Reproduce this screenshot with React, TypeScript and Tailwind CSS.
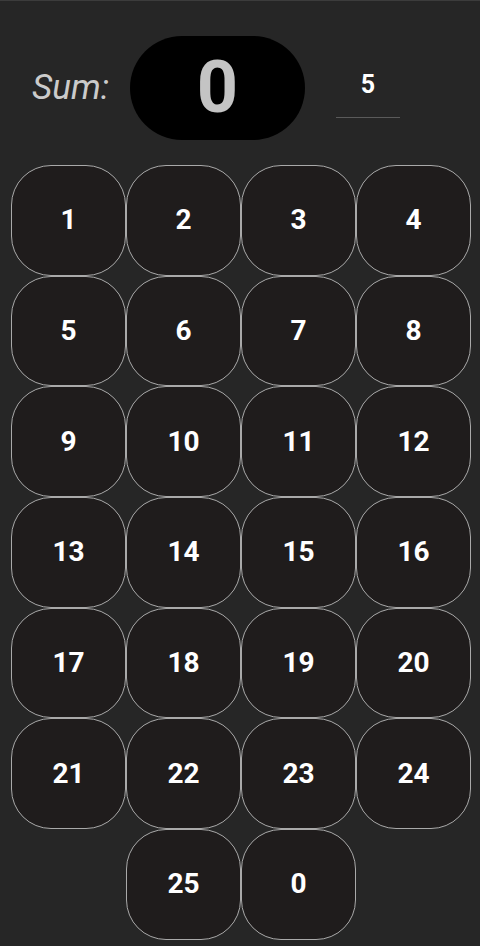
import { useState } from "react";

const nums = Array.from({ length: 24 }, (_, i) => i + 1);

export default function App() {
  const [sum, setSum] = useState(0);
  const [target, setTarget] = useState("5");

  const cell =
    "h-[110.7px] rounded-[40px] border border-[#a9a9a9] bg-[#1f1c1c] text-white text-[28px] font-bold flex items-center justify-center";

  return (
    <div
      className="w-[480px] h-[946px] bg-[#262626] border-t border-[#3c3c3c] overflow-hidden"
      style={{ fontFamily: "Roboto, 'Liberation Sans', sans-serif" }}
    >
      <div className="flex items-center pt-[35px] h-[139px]">
        <span className="ml-[32px] w-[98px] text-[35px] italic font-normal text-[#cbcbcb]">Sum:</span>
        <div className="w-[175px] h-[104px] rounded-full bg-black flex items-center justify-center">
          <span className="text-[72px] font-bold text-[#c4c4c4] leading-none">{sum}</span>
        </div>
        <div className="ml-[31px] w-[64px] h-[60px] flex flex-col items-center justify-end">
          <input
            value={target}
            onChange={(e) => setTarget(e.target.value)}
            className="w-full bg-transparent text-center text-white text-[25px] font-bold outline-none pb-[14px] border-b border-[#5a5a5a]"
          />
        </div>
      </div>
      <div className="mt-[25px] pl-[11px] pr-[9px] grid grid-cols-4">
        {nums.map((n) => (
          <button key={n} className={cell} onClick={() => setSum(sum + n)}>
            {n}
          </button>
        ))}
        <div />
        <button className={cell} onClick={() => setSum(sum + 25)}>
          25
        </button>
        <button className={cell} onClick={() => setSum(0)}>
          0
        </button>
      </div>
    </div>
  );
}
